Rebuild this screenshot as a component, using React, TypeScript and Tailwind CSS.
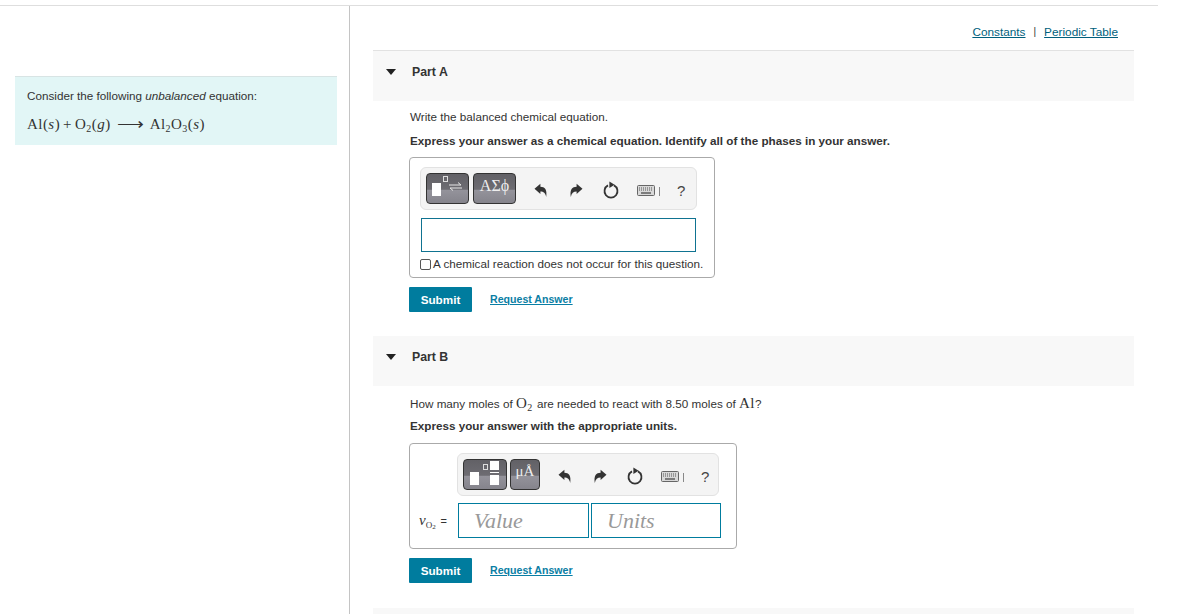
const sans = { fontFamily: '"Liberation Sans", Arial, sans-serif' };

function UndoIcon() {
  return (
    <svg width="14" height="15" viewBox="0 0 14 15" className="text-[#333] shrink-0">
      <path d="M0.5 5.8 L6.4 0.8 V3.8 C10.8 3.8 13.4 6.6 12.2 14 C11.4 10.2 9.6 8.6 6.4 8.6 V11 Z" fill="currentColor" />
    </svg>
  );
}

function RedoIcon() {
  return (
    <svg width="14" height="15" viewBox="0 0 14 15" className="text-[#333] shrink-0">
      <path d="M13.5 5.8 L7.6 0.8 V3.8 C3.2 3.8 0.6 6.6 1.8 14 C2.6 10.2 4.4 8.6 7.6 8.6 V11 Z" fill="currentColor" />
    </svg>
  );
}

function ResetIcon() {
  return (
    <svg width="16" height="18" viewBox="0 0 16 18" fill="none" className="text-[#333] shrink-0">
      <path d="M5 4.4 A6.5 6.5 0 1 0 11 4.4" stroke="currentColor" strokeWidth="1.8" />
      <path d="M6.4 0.4 L11.6 3.8 L6.4 7 Z" fill="currentColor" />
    </svg>
  );
}

function KeyboardIcon() {
  return (
    <svg width="18" height="11" viewBox="0 0 18 11" className="shrink-0">
      <rect x="0.5" y="0.5" width="17" height="10" rx="1" fill="#d8d8d8" stroke="#666" />
      <path d="M2 3 H16 M2 5 H16" stroke="#555" strokeDasharray="1 1" />
      <path d="M4 8 H14" stroke="#555" strokeWidth="1.4" />
    </svg>
  );
}

function Toolbar({ children, className }: { children: React.ReactNode; className: string }) {
  return (
    <div className={"h-[43px] rounded-md border border-[#e2e2e2] bg-[#f4f4f4] flex items-center " + className}>
      {children}
    </div>
  );
}

function ToolButton({ children, width }: { children: React.ReactNode; width: string }) {
  return (
    <div className={"relative h-[31px] rounded-[4px] border border-[#333] overflow-hidden bg-[linear-gradient(#626166_0%,#6d6c72_53%,#94939b_55%,#85848c_100%)] " + width}>
      {children}
    </div>
  );
}

function ToolActions() {
  return (
    <div className="flex items-center ml-[18px] pt-[3px]">
      <UndoIcon />
      <div className="w-[21px]" />
      <RedoIcon />
      <div className="w-[20px]" />
      <ResetIcon />
      <div className="w-[18px]" />
      <KeyboardIcon />
      <div className="ml-[4px] w-px h-[9px] bg-[#888] mt-[2px]" />
      <span className="ml-[17px] text-[15px] leading-none text-[#444]">?</span>
    </div>
  );
}

function PartHeader({ name }: { name: string }) {
  return (
    <div className="h-[50px] bg-[#f8f8f8] flex pt-[14px] pl-[13px] gap-[16px] text-[12.3px] font-bold text-[#333]">
      <div className="w-0 h-0 mt-[4px] border-x-[5px] border-x-transparent border-t-[6px] border-t-[#222]" />
      <span className="leading-[14px]">{name}</span>
    </div>
  );
}

function SubmitRow() {
  return (
    <div className="flex items-center gap-[18px]">
      <button className="w-[63px] h-[25px] bg-[#007c9e] text-white text-[11.7px] font-bold rounded-[1px]">Submit</button>
      <a className="text-[10.6px] font-bold text-[#0a7ea4] underline">Request Answer</a>
    </div>
  );
}

export default function App() {
  return (
    <div className="w-[1180px] h-[614px] overflow-hidden bg-white pt-[5px] text-[#333]" style={sans}>
      <div className="w-[1158px] h-[609px] border-t border-[#dedede] flex">
        <div className="w-[350px] shrink-0 border-r border-[#c4c4c4] pl-[15px] pr-[12px] pt-[70px]">
          <div className="h-[69px] bg-[#e2f6f6] border-t border-[#d8e4e4] pl-[12px] pt-[12px] text-[11.7px]">
            <p className="leading-[14px]">
              Consider the following <i>unbalanced</i> equation:
            </p>
            <p className="mt-[12px] text-[15px] leading-[18px] tracking-[0.45px] font-['Liberation_Serif'] whitespace-nowrap">
              Al(<i>s</i>)<span className="mx-[3px]">+</span>O<sub className="text-[10px]">2</sub>(<i>g</i>)
              <span className="ml-[9px] mr-[7px] inline-block w-[23px] text-center scale-x-125">⟶</span>
              Al<sub className="text-[10px]">2</sub>O<sub className="text-[10px]">3</sub>(<i>s</i>)
            </p>
          </div>
        </div>

        <div className="flex-1 pl-[23px] pr-[24px]">
          <div className="h-[44px] flex justify-end pt-[19px] pr-[16px] gap-[8px] text-[11.8px] leading-[14px] text-[#005f7d]">
            <a className="underline">Constants</a>
            <span className="text-[#333] text-[10px]">|</span>
            <a className="underline">Periodic Table</a>
          </div>

          <div className="border-t border-[#e2e2e2]">
            <PartHeader name="Part A" />
          </div>
          <div className="pl-[36px] h-[235px] text-[11.7px]">
            <p className="pl-px pt-[9px] leading-[14px]">Write the balanced chemical equation.</p>
            <p className="pl-px mt-[10px] leading-[14px] font-bold">
              Express your answer as a chemical equation. Identify all of the phases in your answer.
            </p>
            <div className="mt-[9px] w-[306px] h-[121px] rounded-[4px] border border-[#aaa] pl-[10px] pt-[9px]">
              <Toolbar className="w-[277px] pl-[5px]">
                <div className="flex gap-[4px]">
                  <ToolButton width="w-[43px]">
                    <div className="absolute left-[5px] top-[9px] w-[9px] h-[13px] bg-white" />
                    <div className="absolute left-[16px] top-[2px] w-[5px] h-[6px] border border-[#ddd]" />
                    <svg width="13" height="9" viewBox="0 0 13 9" fill="none" className="absolute left-[22px] top-[8px]">
                      <path d="M0 3 H12 L9 0.5 M13 6 H1 L4 8.5" stroke="#e8e8e8" />
                    </svg>
                  </ToolButton>
                  <ToolButton width="w-[43px]">
                    <span className="absolute inset-0 top-[3px] text-center text-[16px] leading-[18px] text-[#eee] font-['Liberation_Serif']">ΑΣϕ</span>
                  </ToolButton>
                </div>
                <ToolActions />
              </Toolbar>
              <div className="mt-[8px] w-[275px] h-[34px] ml-[1px] border border-[#0f7391]" />
              <label className="mt-[5px] flex items-center gap-[2px] leading-[14px]">
                <span className="w-[11px] h-[11px] rounded-[2px] border border-[#555] bg-white" />
                A chemical reaction does not occur for this question.
              </label>
            </div>
            <div className="mt-[9px]">
              <SubmitRow />
            </div>
          </div>

          <PartHeader name="Part B" />
          <div className="pl-[36px] text-[11.7px]">
            <p className="pl-px mt-[9px] leading-[16px]">
              How many moles of <span className="font-['Liberation_Serif'] text-[15px] tracking-[0.5px] mr-px">O<sub className="text-[10px]">2</sub></span> are needed to react with 8.50 moles of <span className="font-['Liberation_Serif'] text-[15px] tracking-[0.5px]">Al</span>?
            </p>
            <p className="pl-px mt-[7px] leading-[14px] font-bold">Express your answer with the appropriate units.</p>
            <div className="mt-[10px] w-[328px] h-[106px] rounded-[4px] border border-[#aaa] pl-[10px] pt-[9px]">
              <div className="pl-[37px]">
                <Toolbar className="w-[262px] pl-[5px]">
                  <div className="flex gap-[3px]">
                    <ToolButton width="w-[44px]">
                      <div className="absolute left-[6px] top-[12px] w-[9px] h-[13px] bg-white" />
                      <div className="absolute left-[19px] top-[4px] w-[5px] h-[6px] border border-[#ddd]" />
                      <div className="absolute left-[26px] top-[1px] w-[9px] h-[9px] bg-white" />
                      <div className="absolute left-[26px] top-[12px] w-[9px] h-px bg-white" />
                      <div className="absolute left-[26px] top-[15px] w-[9px] h-[10px] bg-white" />
                    </ToolButton>
                    <ToolButton width="w-[30px]">
                      <span className="absolute inset-0 top-[2px] text-center text-[15px] leading-[18px] text-[#eee] font-['Liberation_Serif']">μÅ</span>
                    </ToolButton>
                  </div>
                  <ToolActions />
                </Toolbar>
              </div>
              <div className="mt-[7px] flex items-center">
                <span className="-ml-px w-[39px] whitespace-nowrap font-['Liberation_Serif'] text-[15px]">
                  <i>ν</i><sub className="text-[9px]">O<sub className="text-[7px]">2</sub></sub> <span className="font-['Liberation_Sans'] text-[11px] ml-px">=</span>
                </span>
                <div className="w-[131px] h-[35px] border border-[#007c9e] pl-[15px] flex items-center font-['Liberation_Serif'] italic text-[22px] text-[#999]">Value</div>
                <div className="ml-[2px] w-[130px] h-[35px] border border-[#007c9e] pl-[15px] flex items-center font-['Liberation_Serif'] italic text-[22px] text-[#999]">Units</div>
              </div>
            </div>
            <div className="mt-[9px]">
              <SubmitRow />
            </div>
          </div>
          <div className="mt-[25px] h-[10px] bg-[#f8f8f8]" />
        </div>
      </div>
    </div>
  );
}
